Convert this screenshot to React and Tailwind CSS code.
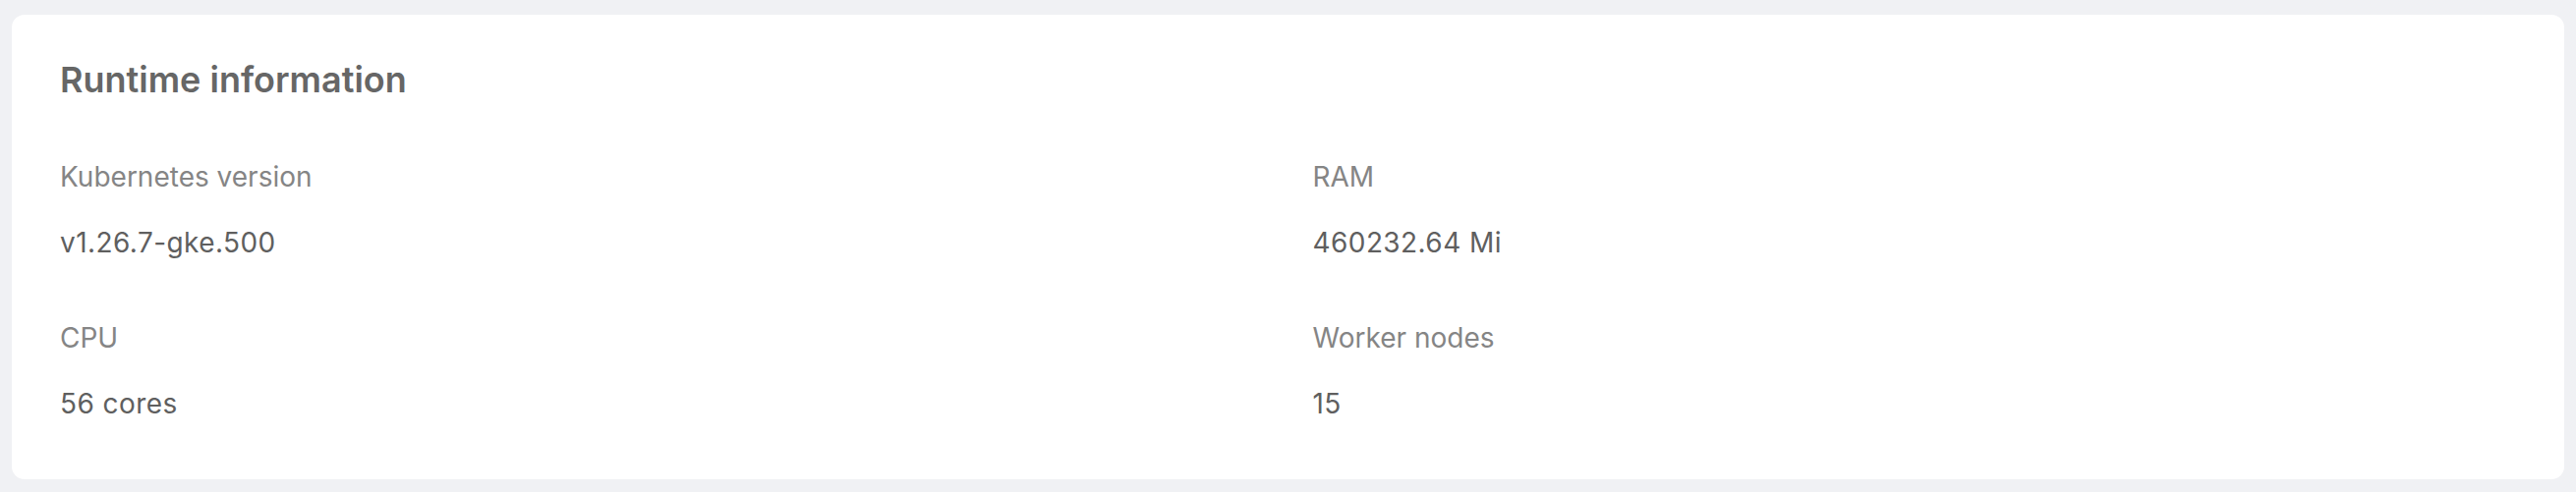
const items = [
  { label: 'Kubernetes version', value: 'v1.26.7-gke.500' },
  { label: 'RAM', value: '460232.64 Mi' },
  { label: 'CPU', value: '56 cores' },
  { label: 'Worker nodes', value: '15' },
];

const App = () => {
  return (
    <div className="min-h-screen bg-[#f0f1f4] px-[12px] pt-[15px] pb-[14px] font-['Inter',sans-serif]">
      {/* Runtime card */}
      <section className="bg-white rounded-[13px] pl-[49px] pr-[49px] pt-[44px] pb-[59px]">
        <h2 className="text-[36px] leading-[44px] font-semibold text-[#666666]">Runtime information</h2>
        <div className="grid grid-cols-2 gap-x-[50px] gap-y-[61px] mt-[59px]">
          {items.map((item) => (
            <div key={item.label} className="flex flex-col gap-[31px]">
              <div className="text-[28px] leading-[36px] text-[#858585]">{item.label}</div>
              <div className="text-[28px] leading-[36px] text-[#5f5f5f] tracking-[0.015em]">{item.value}</div>
            </div>
          ))}
        </div>
      </section>
    </div>
  );
};

export default App;
